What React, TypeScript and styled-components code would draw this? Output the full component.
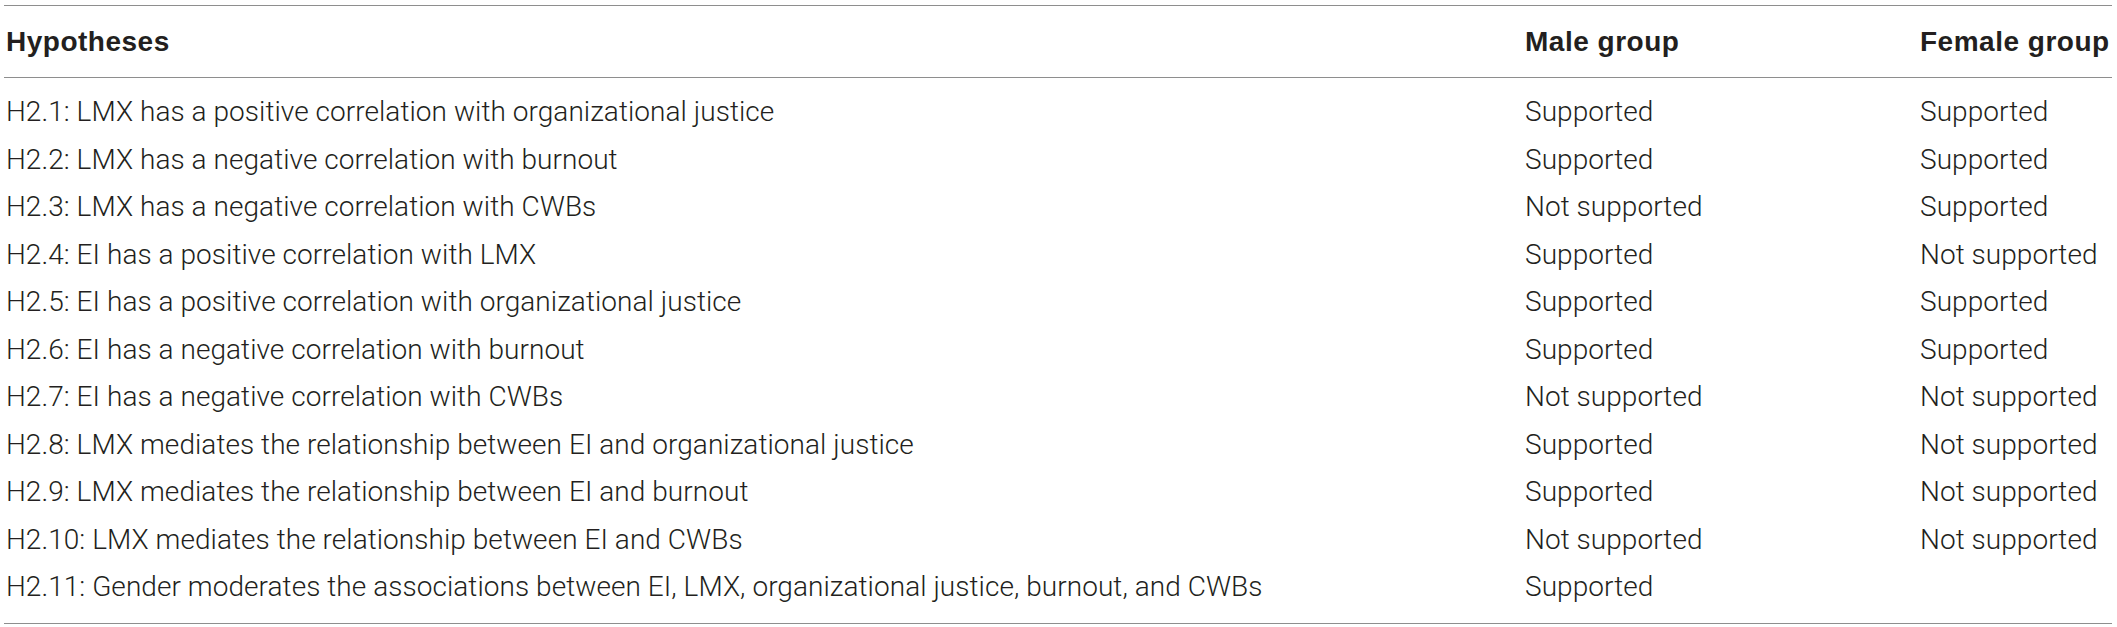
import React from "react";
import styled, { createGlobalStyle } from "styled-components";

const Global = createGlobalStyle`
  html, body { margin: 0; padding: 0; background: #ffffff; }
  body { font-family: Roboto, "Liberation Sans", Arial, sans-serif; color: #231f20; }
`;

const Table = styled.div`
  width: 2108px;
  margin: 5px 0 0 4px;
  border-top: 1px solid #8e8e8e;
  border-bottom: 1px solid #8e8e8e;
  display: grid;
  grid-template-columns: 1519px 395px 1fr;
`;

const HeadRow = styled.div`
  display: contents;
`;

const HeadCell = styled.div`
  height: 71px;
  display: flex;
  align-items: center;
  padding-left: 2px;
  font-family: "Liberation Sans", Arial, sans-serif;
  font-weight: 700;
  font-size: 28px;
  letter-spacing: 0.5px;
  border-bottom: 1px solid #8e8e8e;
`;

const Body = styled.div`
  grid-column: 1 / -1;
  display: grid;
  grid-template-columns: 1519px 395px 1fr;
  padding: 10px 0 12px;
`;

const Cell = styled.div`
  height: 47.5px;
  display: flex;
  align-items: center;
  padding-left: 2px;
  font-weight: 300;
  font-size: 28px;
  letter-spacing: 0.05px;
  white-space: nowrap;
`;

const rows: [string, string, string][] = [
  ["H2.1: LMX has a positive correlation with organizational justice", "Supported", "Supported"],
  ["H2.2: LMX has a negative correlation with burnout", "Supported", "Supported"],
  ["H2.3: LMX has a negative correlation with CWBs", "Not supported", "Supported"],
  ["H2.4: EI has a positive correlation with LMX", "Supported", "Not supported"],
  ["H2.5: EI has a positive correlation with organizational justice", "Supported", "Supported"],
  ["H2.6: EI has a negative correlation with burnout", "Supported", "Supported"],
  ["H2.7: EI has a negative correlation with CWBs", "Not supported", "Not supported"],
  ["H2.8: LMX mediates the relationship between EI and organizational justice", "Supported", "Not supported"],
  ["H2.9: LMX mediates the relationship between EI and burnout", "Supported", "Not supported"],
  ["H2.10: LMX mediates the relationship between EI and CWBs", "Not supported", "Not supported"],
  ["H2.11: Gender moderates the associations between EI, LMX, organizational justice, burnout, and CWBs", "Supported", ""],
];

export default function App() {
  return (
    <>
      <Global />
      <Table>
        <HeadRow>
          <HeadCell>Hypotheses</HeadCell>
          <HeadCell>Male group</HeadCell>
          <HeadCell>Female group</HeadCell>
        </HeadRow>
        <Body>
          {rows.map((r, i) => (
            <React.Fragment key={i}>
              <Cell>{r[0]}</Cell>
              <Cell>{r[1]}</Cell>
              <Cell>{r[2]}</Cell>
            </React.Fragment>
          ))}
        </Body>
      </Table>
    </>
  );
}
